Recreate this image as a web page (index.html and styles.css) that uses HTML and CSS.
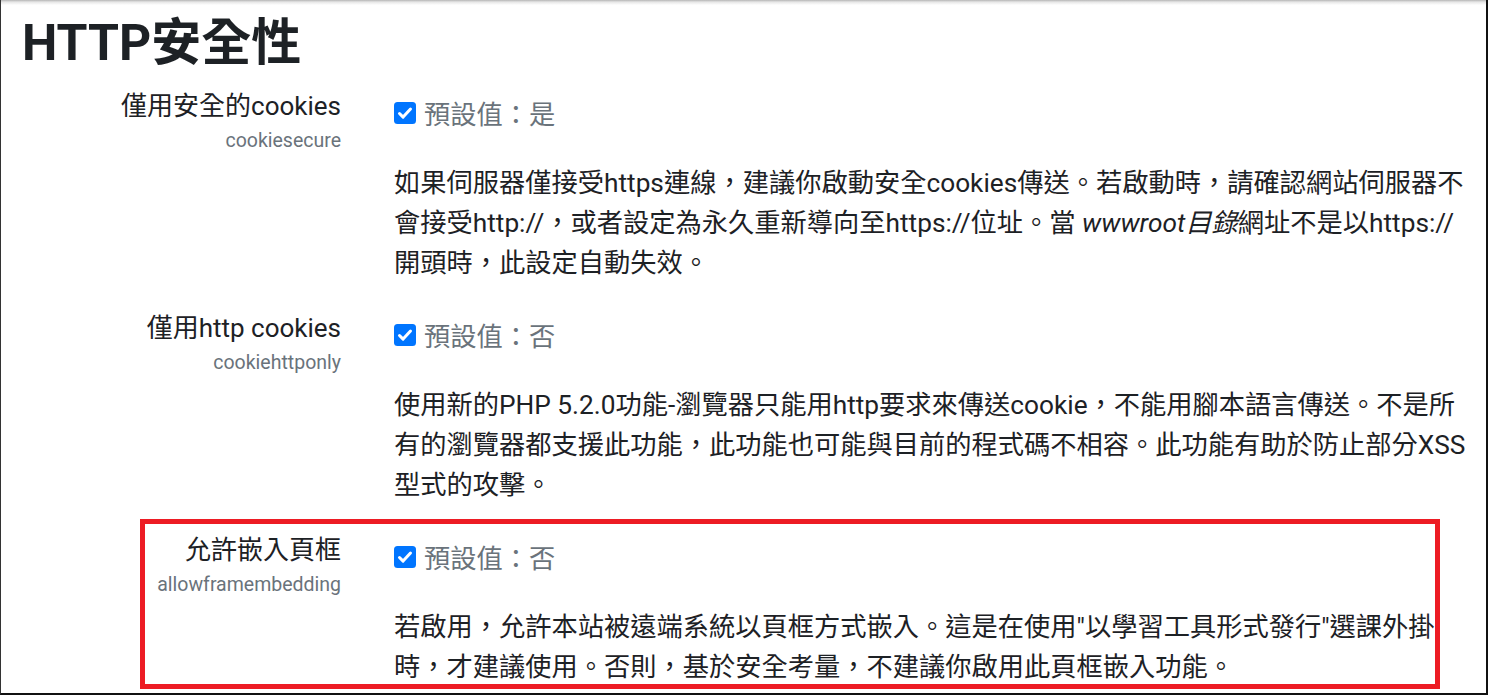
FILE: index.html
```html
<!DOCTYPE html>
<html lang="zh-Hant">
<head>
<meta charset="utf-8">
<title>HTTP安全性</title>
<link rel="stylesheet" href="styles.css">
</head>
<body>
<div class="frame">
  <h2 class="page-title">HTTP安全性</h2>

  <div class="setting-row">
    <div class="label-col">
      <div class="label-main">僅用安全的cookies</div>
      <div class="label-sub">cookiesecure</div>
    </div>
    <div class="setting-col">
      <div class="form-check">
        <svg class="checkbox" width="22" height="22" viewBox="0 0 22 22"><rect width="22" height="22" rx="3.5" fill="#0075ff"/><path d="M5.5 11.5l3.6 3.6 7.4-8" stroke="#fff" stroke-width="3" fill="none" stroke-linecap="round" stroke-linejoin="round"/></svg>
        <span class="default-info">預設值：是</span>
      </div>
      <div class="desc">如果伺服器僅接受https連線，建議你啟動安全cookies傳送。若啟動時，請確認網站伺服器不會接受http://，或者設定為永久重新導向至https://位址。當 <em>wwwroot目錄</em>網址不是以https://開頭時，此設定自動失效。</div>
    </div>
  </div>

  <div class="setting-row">
    <div class="label-col">
      <div class="label-main">僅用http cookies</div>
      <div class="label-sub">cookiehttponly</div>
    </div>
    <div class="setting-col">
      <div class="form-check">
        <svg class="checkbox" width="22" height="22" viewBox="0 0 22 22"><rect width="22" height="22" rx="3.5" fill="#0075ff"/><path d="M5.5 11.5l3.6 3.6 7.4-8" stroke="#fff" stroke-width="3" fill="none" stroke-linecap="round" stroke-linejoin="round"/></svg>
        <span class="default-info">預設值：否</span>
      </div>
      <div class="desc">使用新的PHP 5.2.0功能-瀏覽器只能用http要求來傳送cookie，不能用腳本語言傳送。不是所有的瀏覽器都支援此功能，此功能也可能與目前的程式碼不相容。此功能有助於防止部分XSS型式的攻擊。</div>
    </div>
  </div>

  <div class="setting-row highlighted">
    <div class="label-col">
      <div class="label-main">允許嵌入頁框</div>
      <div class="label-sub">allowframembedding</div>
    </div>
    <div class="setting-col">
      <div class="form-check">
        <svg class="checkbox" width="22" height="22" viewBox="0 0 22 22"><rect width="22" height="22" rx="3.5" fill="#0075ff"/><path d="M5.5 11.5l3.6 3.6 7.4-8" stroke="#fff" stroke-width="3" fill="none" stroke-linecap="round" stroke-linejoin="round"/></svg>
        <span class="default-info">預設值：否</span>
      </div>
      <div class="desc">若啟用，允許本站被遠端系統以頁框方式嵌入。這是在使用"以學習工具形式發行"選課外掛時，才建議使用。否則，基於安全考量，不建議你啟用此頁框嵌入功能。</div>
    </div>
  </div>
</div>
</body>
</html>
```

FILE: styles.css
```css
html, body {
  margin: 0;
  padding: 0;
  background: #fff;
}

body {
  font-family: Roboto, "Noto Sans CJK TC", "Noto Sans", sans-serif;
  color: #1d2125;
}

.frame {
  box-sizing: border-box;
  height: 695px;
  overflow: hidden;
  padding: 11px 0 0 21px;
  border-left: 1px solid #333;
  border-right: 2px solid #111;
  border-bottom: 2px solid #111;
  background: linear-gradient(#b5b5b5, #e6e6e6 2px, #fff 5px);
}

.page-title {
  margin: 0 0 11px 0;
  font-size: 50px;
  line-height: 64px;
  font-weight: 700;
}

.setting-row {
  display: grid;
  grid-template-columns: 319px 1076px;
  column-gap: 53px;
  margin-bottom: 25px;
}

.label-col {
  text-align: right;
}

.label-main {
  font-size: 26px;
  line-height: 40px;
}

.label-sub {
  font-size: 19.5px;
  line-height: 30px;
  color: #6a737b;
}

.setting-col {
  padding-top: 9px;
}

.form-check {
  display: flex;
  align-items: center;
  gap: 8px;
  height: 40px;
}

.checkbox {
  flex: none;
  margin-top: -4px;
}

.default-info {
  font-size: 26.25px;
  line-height: 40px;
  color: #6a737b;
}

.desc {
  margin-top: 28px;
  font-size: 26.25px;
  line-height: 40px;
}

.desc em {
  font-style: italic;
}

.highlighted {
  position: relative;
}

.highlighted::after {
  content: "";
  position: absolute;
  top: -11px;
  left: 118px;
  right: 46px;
  bottom: -2px;
  border: 5px solid #ed1c24;
  pointer-events: none;
}
```
